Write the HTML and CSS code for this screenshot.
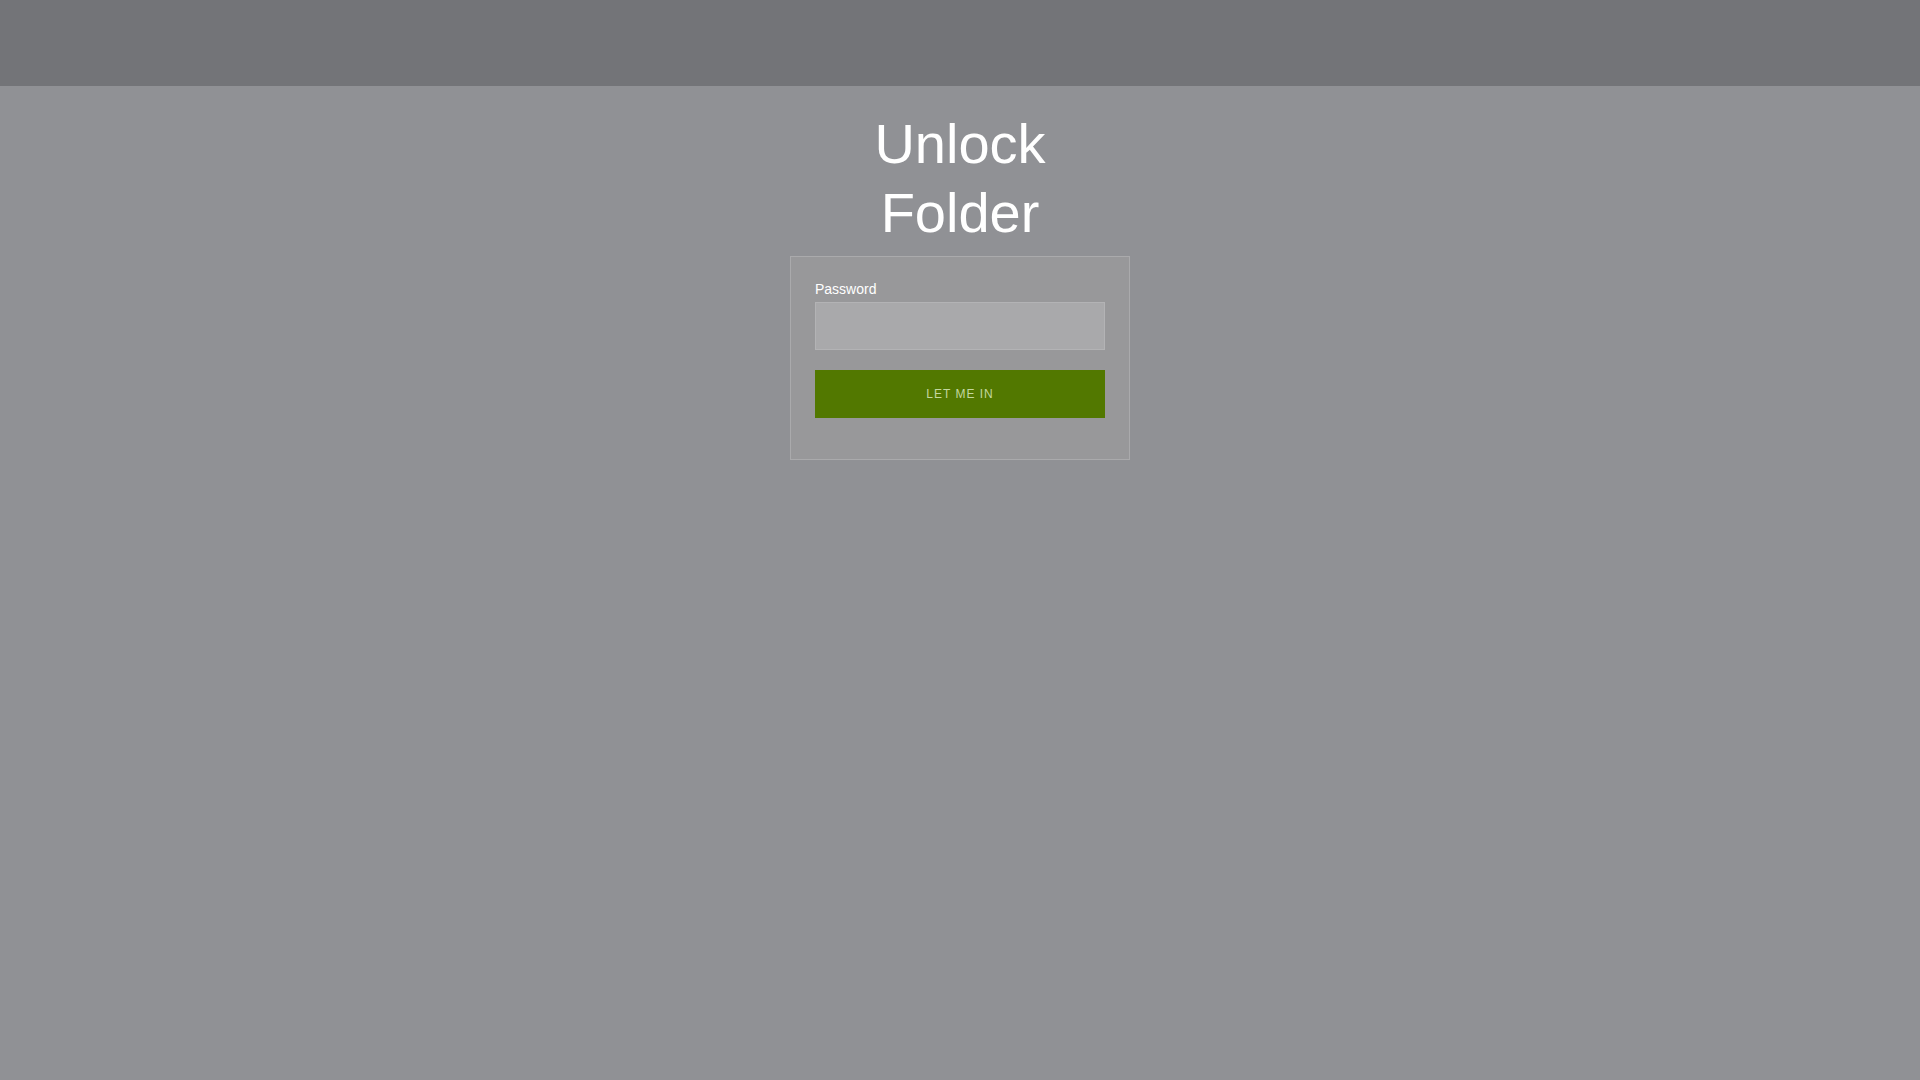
FILE: index.html
```html
<!DOCTYPE html>
<html lang="en">
<head>
<meta charset="utf-8">
<title>Unlock Folder</title>
<link rel="stylesheet" href="styles.css">
</head>
<body>
<header class="topbar"></header>
<main class="main">
  <div class="unlock">
    <h1 class="title">Unlock Folder</h1>
    <form class="card" onsubmit="return false;">
      <label class="label" for="pw">Password</label>
      <input class="input" id="pw" type="password">
      <button class="btn" type="submit">Let me in</button>
    </form>
  </div>
</main>
</body>
</html>
```

FILE: styles.css
```css
* { box-sizing: border-box; }
html, body {
  margin: 0;
  padding: 0;
  height: 100%;
}
body {
  background: #909195;
  font-family: "Liberation Sans", Arial, sans-serif;
  color: #ffffff;
}
.topbar {
  height: 86px;
  background: #737478;
}
.main {
  display: flex;
  justify-content: center;
}
.unlock {
  width: 340px;
  display: flex;
  flex-direction: column;
}
.title {
  margin: 23px 0 9px;
  font-size: 56px;
  line-height: 69px;
  font-weight: 400;
  text-align: center;
  color: #ffffff;
}
.card {
  display: flex;
  flex-direction: column;
  background: #98989a;
  border: 1px solid #aaaaac;
  padding: 24px 24px 24px;
}
.label {
  font-size: 14px;
  line-height: 16px;
  margin-bottom: 5px;
  color: #ffffff;
}
.input {
  height: 48px;
  width: 100%;
  background: #a9a9ab;
  border: 1px solid #b3b3b5;
  border-radius: 0;
  outline: none;
  margin: 0 0 20px;
  padding: 0 12px;
  font-family: inherit;
  font-size: 14px;
  color: #ffffff;
}
.btn {
  height: 48px;
  width: 100%;
  background: #527800;
  border: none;
  border-radius: 0;
  margin: 0 0 17px;
  color: #c3d79f;
  font-family: "Liberation Sans", Arial, sans-serif;
  font-size: 12px;
  letter-spacing: 1px;
  text-transform: uppercase;
  cursor: pointer;
}
```
